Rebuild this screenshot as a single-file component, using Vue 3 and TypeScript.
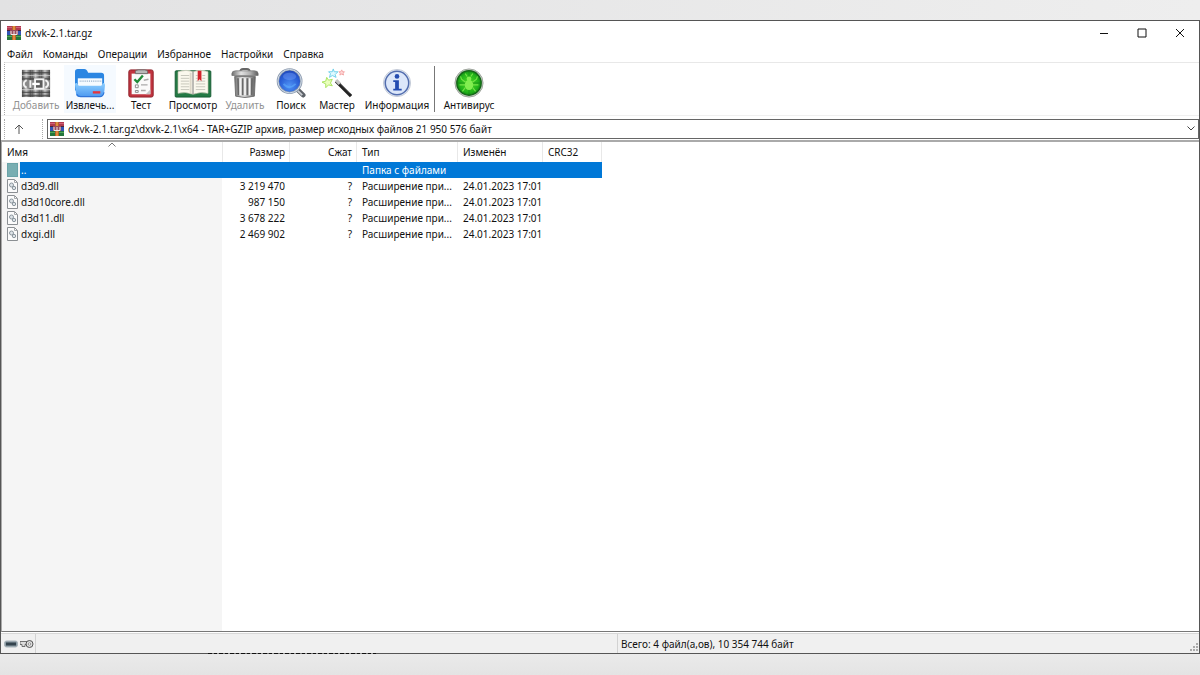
<script setup lang="ts">
import { ref } from 'vue'

interface Tool { id: string; label: string; disabled?: boolean; hot?: boolean }
interface Entry { name: string; size: string; packed: string; type: string; modified: string }

const menus: string[] = ['Файл', 'Команды', 'Операции', 'Избранное', 'Настройки', 'Справка']

const tools: Tool[] = [
  { id: 'add', label: 'Добавить', disabled: true },
  { id: 'extract', label: 'Извлечь...', hot: true },
  { id: 'test', label: 'Тест' },
  { id: 'view', label: 'Просмотр' },
  { id: 'delete', label: 'Удалить', disabled: true },
  { id: 'find', label: 'Поиск' },
  { id: 'wizard', label: 'Мастер' },
  { id: 'info', label: 'Информация' },
  { id: 'virus', label: 'Антивирус' },
]

const entries: Entry[] = [
  { name: '..', size: '', packed: '', type: 'Папка с файлами', modified: '' },
  { name: 'd3d9.dll', size: '3 219 470', packed: '?', type: 'Расширение при...', modified: '24.01.2023 17:01' },
  { name: 'd3d10core.dll', size: '987 150', packed: '?', type: 'Расширение при...', modified: '24.01.2023 17:01' },
  { name: 'd3d11.dll', size: '3 678 222', packed: '?', type: 'Расширение при...', modified: '24.01.2023 17:01' },
  { name: 'dxgi.dll', size: '2 469 902', packed: '?', type: 'Расширение при...', modified: '24.01.2023 17:01' },
]

const selected = ref(0)
const path = ref('dxvk-2.1.tar.gz\\dxvk-2.1\\x64 - TAR+GZIP архив, размер исходных файлов 21 950 576 байт')
</script>

<template>
  <div class="desktop">
    <svg class="defs" width="0" height="0" aria-hidden="true">
      <defs>
        <linearGradient id="folderFront" x1="0" y1="0" x2="0" y2="1">
          <stop offset="0" stop-color="#8fd0ff" /><stop offset="1" stop-color="#4a98f0" />
        </linearGradient>
        <linearGradient id="metal" x1="0" y1="0" x2="1" y2="0">
          <stop offset="0" stop-color="#6e6e6e" /><stop offset=".35" stop-color="#e2e2e2" />
          <stop offset=".7" stop-color="#b0b0b0" /><stop offset="1" stop-color="#5c5c5c" />
        </linearGradient>
        <linearGradient id="spine" x1="0" y1="0" x2="1" y2="0">
          <stop offset="0" stop-color="#4c4c4c" /><stop offset=".45" stop-color="#c6c6c6" /><stop offset="1" stop-color="#4a4a4a" />
        </linearGradient>
        <radialGradient id="lens" cx=".5" cy=".7" r=".7">
          <stop offset="0" stop-color="#4f93f5" /><stop offset=".6" stop-color="#2a5fd6" /><stop offset="1" stop-color="#1f44b4" />
        </radialGradient>
        <radialGradient id="green" cx=".5" cy=".5" r=".55">
          <stop offset="0" stop-color="#4fdc24" /><stop offset=".7" stop-color="#22b41a" /><stop offset="1" stop-color="#0c7d12" />
        </radialGradient>
        <symbol id="rar" viewBox="0 0 14 14">
          <rect width="14" height="5" fill="#b03a50" /><rect y="1" width="14" height="1" fill="#d0617a" />
          <rect y="5" width="14" height="4" fill="#3254b4" /><rect y="9" width="14" height="5" fill="#23763c" />
          <rect y="10" width="14" height="1" fill="#52a55a" /><rect y="4" width="14" height="1" fill="#4b2238" />
          <rect x="5" width="4" height="14" fill="#b0642c" /><rect x="6" width="2" height="14" fill="#e28a3e" />
          <rect x="3" y="4" width="8" height="5" fill="#9a4a5c" /><path d="M4 5V8.5H10V5M7 5V8" fill="none" stroke="#f0e8ea" />
        </symbol>
      </defs>
    </svg>

    <main class="window">
      <header class="titlebar">
        <svg class="app-icon" viewBox="0 0 14 14" aria-hidden="true"><use href="#rar" /></svg>
        <h1>dxvk-2.1.tar.gz</h1>
        <div class="controls">
          <button type="button" aria-label="Свернуть"><svg viewBox="0 0 10 10"><path d="M1 5.5H9" /></svg></button>
          <button type="button" aria-label="Развернуть"><svg viewBox="0 0 10 10"><path d="M1 1H9V9H1Z" /></svg></button>
          <button type="button" aria-label="Закрыть"><svg viewBox="0 0 10 10"><path d="M1 1L9 9M9 1L1 9" /></svg></button>
        </div>
      </header>

      <nav class="menu">
        <button v-for="m in menus" :key="m" type="button">{{ m }}</button>
      </nav>

      <div class="toolbar">
        <button
          v-for="t in tools" :key="t.id" type="button" class="tool"
          :class="[t.id, { hot: t.hot }]" :disabled="t.disabled"
        >
          <svg v-if="t.id === 'add'" viewBox="0 0 32 32" aria-hidden="true">
            <rect x="1" y="2" width="10" height="29" fill="url(#spine)" /><rect x="11" y="2" width="10" height="29" fill="url(#spine)" /><rect x="21" y="2" width="10" height="29" fill="url(#spine)" />
            <path d="M1 5H31M1 26H31" stroke="#3e3e3e" stroke-width="1.5" opacity=".7" />
            <path d="M1 8H31M1 23H31" stroke="#e0e0e0" stroke-width="1.2" opacity=".6" />
            <path d="M1 11.5H31M1 29.5H31" stroke="#444" stroke-width="2" opacity=".7" />
            <rect x="1" y="13" width="30" height="8" fill="#8a8a8a" />
            <path d="M6 13C2 15 2 19 6 21M10 13V21M26 13C30 15 30 19 26 21" stroke="#f0f0f0" stroke-width="2" fill="none" />
            <rect x="15" y="12" width="9" height="10" fill="#5c5c5c" stroke="#f4f4f4" stroke-width="2" />
            <path d="M12 17H20" stroke="#fff" stroke-width="2.5" />
          </svg>
          <svg v-else-if="t.id === 'extract'" viewBox="0 0 32 32" aria-hidden="true">
            <path d="M0 4Q0 1 3 1H10Q12 1 13 3L14 5H28Q31 5 31 8V24H0Z" fill="#2b86e2" />
            <path d="M3 11H29V21H3Z" fill="#f6fbff" /><path d="M5 14H28" stroke="#8fa9c4" stroke-width="1.5" stroke-dasharray="1 1" />
            <path d="M0 17Q0 16 2 16L4 19H28L30 16Q32 16 32 18L31 27Q30 31 27 31H5Q1 31 1 27Z" fill="url(#folderFront)" />
            <path d="M2 28Q3 30.5 6 30.5H27Q30 30 31 26" fill="none" stroke="#2f74d8" stroke-width="1.2" />
            <path d="M19 26H27" stroke="#e5343c" stroke-width="2.5" />
          </svg>
          <svg v-else-if="t.id === 'test'" viewBox="0 0 32 32" aria-hidden="true">
            <rect x="3" y="2" width="26" height="29" rx="2" fill="#c1343f" stroke="#8d2029" />
            <path d="M6 6H26V28H6Z" fill="#fafafa" /><path d="M21 28L26 23V28Z" fill="#c7c7c7" />
            <path d="M10 6V4Q10 2 13 2H20Q23 2 23 4V6Z" fill="#b8b8b8" stroke="#6e6e6e" />
            <path d="M9 12L12 15L18 8" stroke="#218b3a" stroke-width="2.5" fill="none" />
            <path d="M19 13L24 12M16 18H23M16 24H21" stroke="#aaa" stroke-width="1.5" />
            <path d="M10 18H13V21H10ZM10 24H13V26H10Z" fill="#fff" stroke="#888" />
          </svg>
          <svg v-else-if="t.id === 'view'" class="wide" viewBox="0 0 40 32" aria-hidden="true">
            <rect x="1" y="3" width="38" height="28" rx="1" fill="#237944" stroke="#145b31" />
            <path d="M4 4Q13 1 20 4Q28 1 36 4V27Q28 25 20 28Q12 25 4 27Z" fill="#faf8ed" stroke="#c4c4b0" stroke-width=".7" />
            <path d="M20 4V28" stroke="#777" /><path d="M17.5 5V27" stroke="#ddd8c8" stroke-width="2" />
            <path d="M7 8H16M7 11H16M7 14H16M7 17H16M7 20H16M7 23H16M23 8H25M30 8H33M23 11H25M30 11H33M23 14H33M23 17H33M23 20H33M23 23H33" stroke="#c4c4ba" />
            <path d="M25 3H29V14L27 12L25 14Z" fill="#d2232b" />
          </svg>
          <svg v-else-if="t.id === 'delete'" viewBox="0 0 32 32" aria-hidden="true">
            <path d="M11 4Q11 1 14 1H18Q21 1 21 4" fill="none" stroke="#666" stroke-width="2" />
            <path d="M2 6Q2 3 6 3H26Q30 3 30 6V8H2Z" fill="url(#metal)" stroke="#777" stroke-width=".8" />
            <path d="M5 9H27L26 30Q16 33 6 30Z" fill="url(#metal)" stroke="#707070" />
            <path d="M8.5 11L9 29M13.5 11V29M18.5 11V29M23.5 11L23 29" stroke="#686868" stroke-width="1.8" />
            <path d="M11 11V29M16 11V29M21 11V29" stroke="#f2f2f2" stroke-width="1.8" />
          </svg>
          <svg v-else-if="t.id === 'find'" viewBox="0 0 32 32" aria-hidden="true">
            <path d="M23 23L29 29" stroke="#5d6269" stroke-width="5" stroke-linecap="round" /><path d="M22 23L28 29" stroke="#c9ccd1" stroke-width="2" />
            <circle cx="14.5" cy="14" r="12.5" fill="url(#lens)" stroke="#8d9bae" stroke-width="2.5" />
            <circle cx="14.5" cy="14" r="12.5" fill="none" stroke="#d4dfec" stroke-width="1" />
            <ellipse cx="14.5" cy="9" rx="7" ry="4" fill="#85adff" opacity=".35" />
            <path d="M8 17Q14 24 21 17" fill="none" stroke="#63b6ff" opacity=".5" stroke-width="2" />
          </svg>
          <svg v-else-if="t.id === 'wizard'" viewBox="0 0 32 32" aria-hidden="true">
            <path d="M15 14L31 30" stroke="#222" stroke-width="3.5" /><path d="M15 13L19 17" stroke="#c4c4c4" stroke-width="3.5" /><path d="M20 17L30 27" stroke="#888" />
            <path d="M12 1L13 4L17 4L14 7L15 10L11 8L8 10L9 6L7 4H11Z" fill="#dff9ff" stroke="#6ccfe9" />
            <path d="M21 2L22 4L24 4L22.500 5.500L23 7.500L21 6.500L19 7.500L19.500 5.500L18 4H20Z" fill="#ffd9d9" stroke="#f2a4a4" />
            <path d="M5 10L7 13L11 12L9 16L11 19L7 18L4 21L4 17L0 15L4 14Z" fill="#eaffbd" stroke="#a6e25c" />
          </svg>
          <svg v-else-if="t.id === 'info'" viewBox="0 0 32 32" aria-hidden="true">
            <circle cx="16" cy="16" r="14.500" fill="#e2e9f5" stroke="#c3cad6" /><circle cx="16" cy="16" r="12.500" fill="#dce7fa" stroke="#526dae" stroke-width="1.600" />
            <circle cx="16" cy="9" r="2.500" fill="#254db1" />
            <path d="M12 13H18V22H21V24H12V22H14V15H12Z" fill="#254db1" />
          </svg>
          <svg v-else viewBox="0 0 32 32" aria-hidden="true">
            <circle cx="16" cy="16" r="15" fill="#c9d1c7" stroke="#9aa199" /><circle cx="16" cy="16" r="13" fill="url(#green)" stroke="#17651a" stroke-width="1.500" />
            <path d="M16 4V28M4 16H28" stroke="#157d17" opacity=".6" />
            <ellipse cx="16" cy="18" rx="4.500" ry="5.500" fill="#82ee50" /><circle cx="16" cy="11.500" r="2.500" fill="#82ee50" />
            <path d="M12 15L8 12L7 9M20 15L24 12L25 9M12 18H6M20 18H26M12 21L9 25M20 21L23 25M14 9L12 6M18 9L20 6" fill="none" stroke="#74e246" stroke-width="1.200" />
          </svg>
          <span>{{ t.label }}</span>
        </button>
        <i class="divider"></i>
      </div>

      <div class="address">
        <button class="up" type="button" aria-label="Вверх"><svg viewBox="0 0 10 10"><path d="M5 10V1M1 5L5 1L9 5" /></svg></button>
        <label class="pathbox">
          <svg class="app-icon" viewBox="0 0 14 14" aria-hidden="true"><use href="#rar" /></svg>
          <input v-model="path" type="text" aria-label="Путь" />
          <svg class="chevron" viewBox="0 0 8 5" aria-hidden="true"><path d="M.5 .5L4 4L7.5 .5" /></svg>
        </label>
      </div>

      <section class="list">
        <table>
          <colgroup><col class="c-name" /><col class="c-size" /><col class="c-packed" /><col class="c-type" /><col class="c-date" /><col class="c-crc" /></colgroup>
          <thead>
            <tr>
              <th class="sorted">Имя<svg viewBox="0 0 8 5" aria-hidden="true"><path d="M.5 4.5L4 1L7.5 4.5" /></svg></th>
              <th class="num">Размер</th><th class="num">Сжат</th><th>Тип</th><th>Изменён</th><th>CRC32</th>
            </tr>
          </thead>
          <tbody>
            <tr v-for="(e, i) in entries" :key="e.name" :class="{ selected: i === selected }" @click="selected = i">
              <td class="name">
                <div>
                  <svg v-if="i === 0" viewBox="0 0 11 14" aria-hidden="true"><rect x=".5" y=".5" width="10" height="13" fill="#78aeb2" stroke="#6aa3a8" /></svg>
                  <svg v-else viewBox="0 0 11 14" aria-hidden="true">
                    <path d="M.5 .5H7.5L10.5 3.5V13.5H.5Z" fill="#fbfbfb" stroke="#8b8f93" /><path d="M7.5 .5V3.5H10.5" fill="none" stroke="#a5a8ab" />
                    <circle cx="4.500" cy="6" r="2" fill="#dde3e7" stroke="#8b969e" /><circle cx="7" cy="9" r="1.700" fill="#dde3e7" stroke="#8b969e" />
                  </svg>
                  <span>{{ e.name }}</span>
                </div>
              </td>
              <td class="num">{{ e.size }}</td><td class="num">{{ e.packed }}</td><td>{{ e.type }}</td><td>{{ e.modified }}</td><td></td>
            </tr>
          </tbody>
        </table>
      </section>

      <footer class="status">
        <div class="icons">
          <svg viewBox="0 0 14 8" aria-hidden="true"><rect x=".5" y="1" width="13" height="6" rx="2" fill="#8c9ba4" stroke="#a9b4ba" /><rect x="2" y="2.500" width="10" height="3" fill="#33434d" /></svg>
          <svg viewBox="0 0 14 8" aria-hidden="true"><path d="M0 1.500H7V4.500H5V6.500H2V4.500H0Z" fill="#ddd" stroke="#555" stroke-width=".8" /><circle cx="9.500" cy="4" r="3.500" fill="#ddd" stroke="#555" /><circle cx="9.500" cy="4" r="1.200" fill="#fff" stroke="#777" stroke-width=".7" /></svg>
        </div>
        <div class="pane"></div>
        <div class="pane total">
          <span>Всего: 4 файл(а,ов), 10 354 744 байт</span>
          <svg class="grip" viewBox="0 0 8 8" aria-hidden="true"><path d="M6 0H8V2H6ZM3 3H5V5H3ZM6 3H8V5H6ZM0 6H2V8H0ZM3 6H5V8H3ZM6 6H8V8H6Z" fill="#aaa" /></svg>
        </div>
        <i class="speckle" aria-hidden="true"></i>
      </footer>
    </main>
  </div>
</template>

<style>
body { margin: 0; }
</style>

<style scoped>
* { box-sizing: border-box; }
.desktop {
  min-height: 100vh; padding: 20px 0 21px; display: flex; flex-direction: column;
  background:
    linear-gradient(90deg, #e2e2e3, #eeeeee) top / 100% 20px no-repeat,
    linear-gradient(180deg, #eaeaea, #e4e4e4) bottom / 100% 21px no-repeat,
    #e8e8e8;
  font: 10px/16px "Noto Sans", "Open Sans", sans-serif; color: #111;
}
.defs { position: absolute; }
button { font: inherit; color: inherit; border: 0; padding: 0; background: none; white-space: nowrap; }
svg { display: block; flex: none; }
.window { flex: 1; display: flex; flex-direction: column; background: #fff; border: 1px solid #555; }
.titlebar { display: flex; align-items: center; height: 24px; padding-left: 6px; gap: 4px; }
.app-icon { width: 14px; height: 14px; }
h1 { margin: 0; font-size: 10px; font-weight: 400; }
.controls { display: flex; margin-left: auto; }
.controls button { width: 38px; height: 24px; display: grid; place-items: center; }
.controls svg { width: 10px; height: 10px; fill: none; stroke: #111; }
.menu { display: flex; height: 17px; padding-left: 6px; gap: 10px; }
.toolbar {
  display: grid; grid-template-columns: 56px 52px 50px 54px 50px 42px 50px 70px 6px 62px;
  height: 53px; margin-left: 3px; padding: 2px 0 2px 3px; border-top: 1px solid #e8e8e8; border-left: 1px dotted #aaa;
}
.tool { display: flex; flex-direction: column; align-items: center; padding-top: 3px; }
.tool svg { width: 30px; height: 30px; }
.tool svg.wide { width: 38px; }
.tool span { line-height: 14px; }
.tool.hot { background: #f5faff; }
.tool:disabled { color: #929292; }
.tool.virus { grid-column: 10; grid-row: 1; }
.divider { grid-column: 9; grid-row: 1; width: 1px; margin: 1px 2px; background: #777; }
.address { display: flex; align-items: center; height: 24px; padding-top: 2px; border-top: 1px solid #f0f0f0; }
.up { width: 39px; height: 20px; margin-left: 3px; padding-left: 9px; border-right: 1px dotted #aaa; border-left: 1px dotted #aaa; }
.up svg { width: 10px; height: 10px; fill: none; stroke: #555; }
.pathbox { flex: 1; display: flex; align-items: center; gap: 4px; height: 20px; margin-left: 4px; padding: 0 3px 0 2px; border: 1px solid #666; }
.pathbox input { flex: 1; min-width: 0; height: 18px; padding: 0; border: 0; outline: 0; background: none; font: inherit; color: inherit; }
.chevron { width: 8px; height: 5px; fill: none; stroke: #444; }
.list {
  flex: 1; margin-top: 1px; border-top: 2px solid #aaa; border-bottom: 1px solid #777; border-left: 1px solid #aaa;
  background: linear-gradient(#fff, #fff) 0 0 / 100% 20px no-repeat, linear-gradient(#f5f5f5, #f5f5f5) 0 0 / 220px 100% no-repeat, #fff;
}
table { width: 600px; table-layout: fixed; border-collapse: separate; border-spacing: 0; }
.c-name { width: 221px; } .c-size { width: 67px; } .c-packed { width: 67px; }
.c-type { width: 101px; } .c-date { width: 85px; } .c-crc { width: 59px; }
th, td { padding: 0 5px; text-align: left; font-weight: 400; white-space: nowrap; height: 16px; line-height: 16px; }
th { height: 20px; border-right: 1px solid #e8e8e8; }
th.num { padding-right: 4px; }
.num { text-align: right; }
.sorted { position: relative; }
.sorted svg { position: absolute; left: 50%; top: 0; margin-left: -4px; width: 8px; height: 5px; fill: none; stroke: #777; }
.name div { display: flex; align-items: center; gap: 1px; height: 16px; }
.name svg { width: 11px; height: 14px; }
.name span { flex: 1; padding-left: 2px; }
td.name { padding-right: 0; }
.selected td { background: #0078d7; color: #fff; }
.selected td.name { background: linear-gradient(90deg, #f5f5f5 18px, #0078d7 18px); }
.status { position: relative; display: flex; align-items: stretch; height: 20px; margin-top: 1px; background: #f0f0f0; border-top: 1px solid #d8d8d8; }
.status .icons { display: flex; align-items: center; gap: 2px; width: 34px; padding-left: 3px; }
.status .icons svg { width: 14px; height: 8px; }
.pane { flex: 1; border-left: 1px solid #d2d2d2; padding-left: 3px; line-height: 20px; }
.total { display: flex; justify-content: space-between; }
.grip { width: 8px; height: 8px; align-self: flex-end; margin: 0 1px 2px 0; }
.speckle {
  position: absolute; left: 207px; bottom: -1px; width: 168px; height: 1px;
  background: repeating-linear-gradient(90deg, #111 0 4px, #777 4px 6px, #111 6px 9px, #999 9px 11px);
}
</style>
